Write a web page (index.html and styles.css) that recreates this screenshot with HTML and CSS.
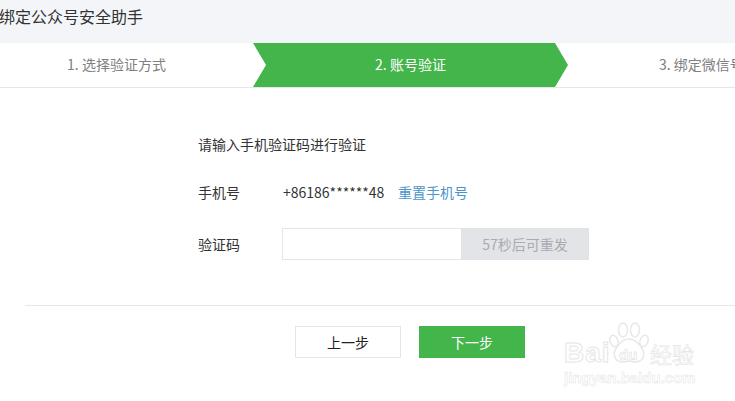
FILE: index.html
```html
<!DOCTYPE html>
<html lang="zh-CN">
<head>
  <meta charset="UTF-8" />
  <title>绑定公众号安全助手</title>
  <link rel="stylesheet" href="styles.css">
</head>
<body>
  <div class="cabecera">绑定公众号安全助手</div>

  <div class="pasos">
    <div class="paso paso-uno">1. 选择验证方式</div>
    <div class="paso paso-activo">2. 账号验证</div>
    <div class="paso paso-tres">3. 绑定微信号</div>
  </div>

  <div class="contenido">
    <p class="aviso">请输入手机验证码进行验证</p>
    <div class="fila fila-telefono">
      <span class="etiqueta">手机号</span>
      <span class="telefono">+86186******48</span>
      <a class="enlace" href="#">重置手机号</a>
    </div>
    <div class="fila fila-codigo">
      <span class="etiqueta">验证码</span>
      <input class="codigo" type="text" />
      <button class="reenviar" disabled>57秒后可重发</button>
    </div>
  </div>

  <div class="acciones">
    <button class="boton boton-previo">上一步</button>
    <button class="boton boton-siguiente">下一步</button>
  </div>

  <!-- marca de agua -->
  <div class="marca">
    <div class="marca-logo">
      <span class="marca-bai">Bai</span>
      <svg class="marca-pata" width="42" height="44" viewBox="0 0 42 44">
        <g fill="#fff" stroke="#e8e8e8" stroke-width="1.5">
          <ellipse cx="6" cy="19" rx="4" ry="6" transform="rotate(-20 6 19)"/>
          <ellipse cx="15" cy="8" rx="4.5" ry="7"/>
          <ellipse cx="27" cy="8" rx="4.5" ry="7"/>
          <ellipse cx="36" cy="19" rx="4" ry="6" transform="rotate(20 36 19)"/>
          <path d="M21 17c6 0 8 3 12 8 5 6 3 15-6 15-3 0-4-1-6-1s-3 1-6 1c-9 0-11-9-6-15 4-5 6-8 12-8z"/>
        </g>
      </svg>
      <span class="marca-du">du</span>
      <span class="marca-jing">经验</span>
    </div>
    <div class="marca-url">jingyan.baidu.com</div>
  </div>
</body>
</html>
```

FILE: styles.css
```css
html, body {
  height: 100%;
}

body {
  margin: 0;
  position: relative;
  overflow: hidden;
  background-color: #fff;
  color: #333;
  font-family: "Noto Sans CJK SC", "Open Sans", sans-serif;
  font-size: 14px;
}

.cabecera {
  height: 43px;
  line-height: 32px;
  background-color: #f3f5f8;
  color: #333;
  font-size: 16px;
  text-indent: -1px;
}

.pasos {
  display: flex;
  height: 44px;
  border-bottom: 1px solid #e4e6e8;
}

.paso {
  flex: none;
  line-height: 43px;
  color: #808080;
  white-space: nowrap;
}

.paso-uno {
  width: 233px;
  padding-right: 20px;
  text-align: center;
}

.paso-activo {
  width: 315px;
  text-align: center;
  color: #fff;
  background-color: #43b54a;
  clip-path: polygon(0 0, 302px 0, 100% 50%, 302px 100%, 0 100%, 13px 50%);
}

.paso-tres {
  padding-left: 91px;
}

.contenido {
  padding: 46px 0 0 198px;
}

.aviso {
  margin: 0;
  height: 20px;
  line-height: 20px;
}

.fila {
  display: flex;
  align-items: center;
}

.fila-telefono {
  margin-top: 28px;
  height: 20px;
}

.fila-codigo {
  margin-top: 26px;
}

.etiqueta {
  width: 84px;
}

.telefono {
  width: 115px;
  margin-left: 1px;
  color: #333;
}

.enlace {
  color: #4a95c9;
  text-decoration: none;
}

.codigo {
  box-sizing: border-box;
  width: 179px;
  height: 32px;
  margin: 0;
  border: 1px solid #e4e6e8;
  border-right: none;
  background-color: #fff;
}

.reenviar {
  box-sizing: border-box;
  width: 128px;
  height: 32px;
  padding: 0;
  border: 1px solid #e0e2e6;
  background-color: #e2e4e8;
  color: #a9abaf;
  font-family: inherit;
  font-size: 14px;
}

.acciones {
  display: flex;
  gap: 18px;
  margin: 45px 0 0 25px;
  padding: 20px 0 0 270px;
  border-top: 1px solid #e6e7e9;
}

.boton {
  box-sizing: border-box;
  width: 106px;
  height: 32px;
  padding: 0;
  font-family: inherit;
  font-size: 14px;
}

.boton-previo {
  border: 1px solid #e4e6e8;
  background-color: #fff;
  color: #222;
}

.boton-siguiente {
  border: none;
  background-color: #43b54a;
  color: #fff;
}

.marca {
  position: absolute;
  left: 564px;
  top: 321px;
  width: 140px;
}

.marca-logo {
  position: relative;
  display: flex;
  align-items: flex-end;
  height: 49px;
}

.marca-bai {
  margin-bottom: 4px;
  font-family: "Liberation Sans", sans-serif;
  font-size: 28px;
  font-weight: bold;
  line-height: 26px;
  letter-spacing: 1px;
  color: #fff;
  -webkit-text-stroke: 1px #e6e6e6;
}

.marca-pata {
  position: absolute;
  left: 44px;
  top: 1px;
}

.marca-du {
  position: absolute;
  left: 55px;
  top: 26px;
  font-family: "Liberation Sans", sans-serif;
  font-size: 15px;
  font-weight: bold;
  line-height: 15px;
  color: #fff;
  -webkit-text-stroke: 0.6px #e0e0e0;
}

.marca-jing {
  position: absolute;
  left: 86px;
  top: 21px;
  font-size: 22px;
  line-height: 22px;
  color: #fff;
  -webkit-text-stroke: 0.6px #e2e2e2;
  white-space: nowrap;
}

.marca-url {
  font-family: "Liberation Sans", sans-serif;
  font-size: 15px;
  font-weight: bold;
  line-height: 16px;
  color: #fff;
  -webkit-text-stroke: 0.6px #e8e8e8;
  white-space: nowrap;
}
```
